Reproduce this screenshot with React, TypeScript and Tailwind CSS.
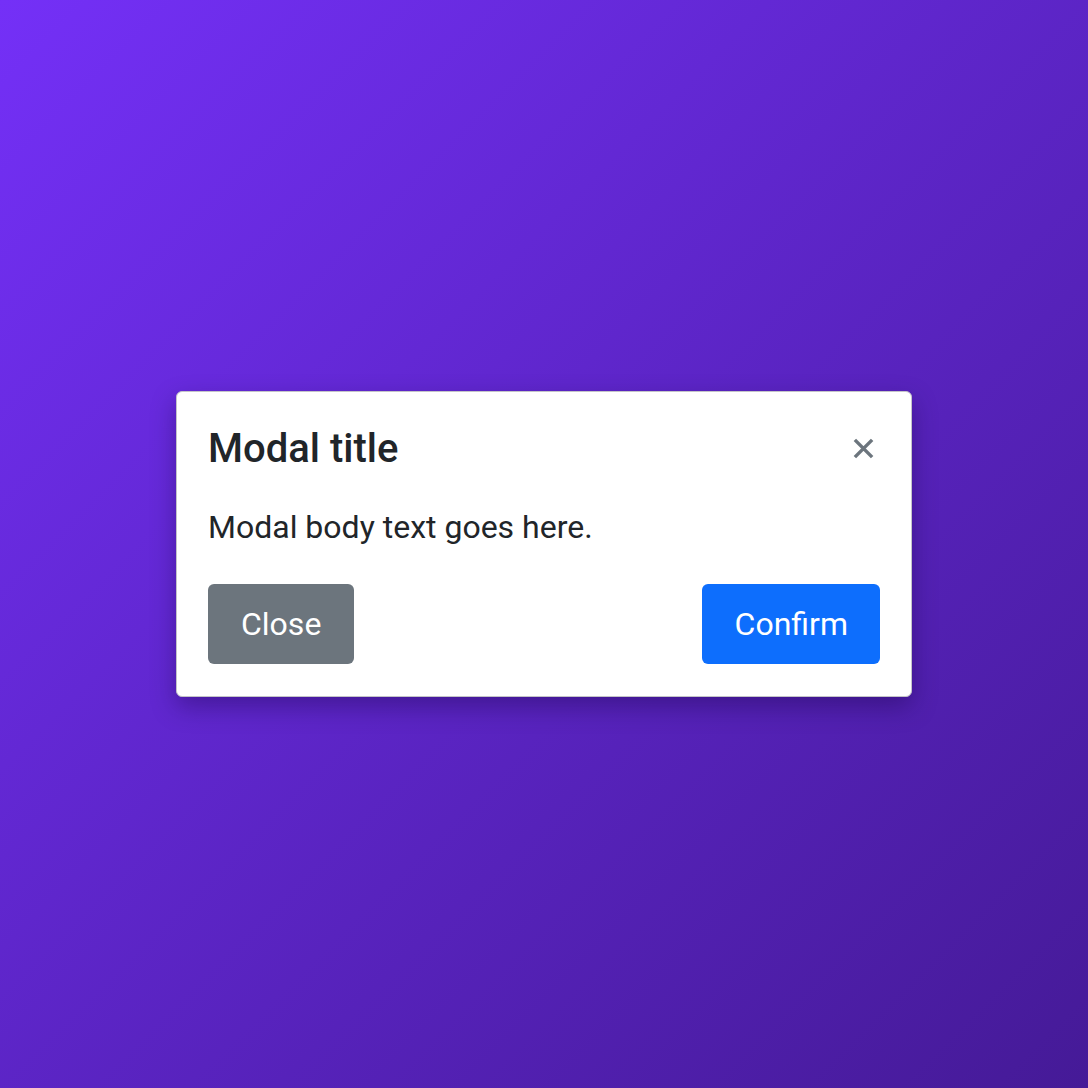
import React from 'react'

const CloseIcon: React.FC = () => (
  <svg width="23" height="23" viewBox="0 0 16 16" fill="none" stroke="currentColor" strokeWidth="2.4" strokeLinecap="butt">
    <path d="M2 2L14 14M14 2L2 14" />
  </svg>
)

export default function App() {
  return (
    <div
      className="w-full h-[1088px] flex items-center justify-center bg-gradient-to-br from-[#7430f7] to-[#451a97]"
      style={{ fontFamily: 'Roboto, "Liberation Sans", sans-serif' }}
    >
      <div className="w-[736px] bg-white border border-[#c4c4c8] rounded-[6px] shadow-[0_10px_24px_rgba(20,0,60,0.35)] pt-8 pb-8 pl-[31px] pr-[31px]">
        <div className="flex items-center justify-between h-12">
          <h5 className="pt-[2px] text-[40px] leading-none font-medium text-[#212529]">Modal title</h5>
          <button className="text-[#6c757d] w-8 h-8 mr-[1px] flex items-center justify-center">
            <CloseIcon />
          </button>
        </div>
        <p className="mt-[34px] text-[32px] leading-[42px] text-[#212529]">Modal body text goes here.</p>
        <div className="flex justify-between mt-[36px]">
          <button className="h-20 px-[33px] rounded-[6px] bg-[#6c757d] text-white text-[32px]">Close</button>
          <button className="h-20 pl-[33px] pr-8 rounded-[6px] bg-[#0d6efd] text-white text-[32px]">Confirm</button>
        </div>
      </div>
    </div>
  )
}
